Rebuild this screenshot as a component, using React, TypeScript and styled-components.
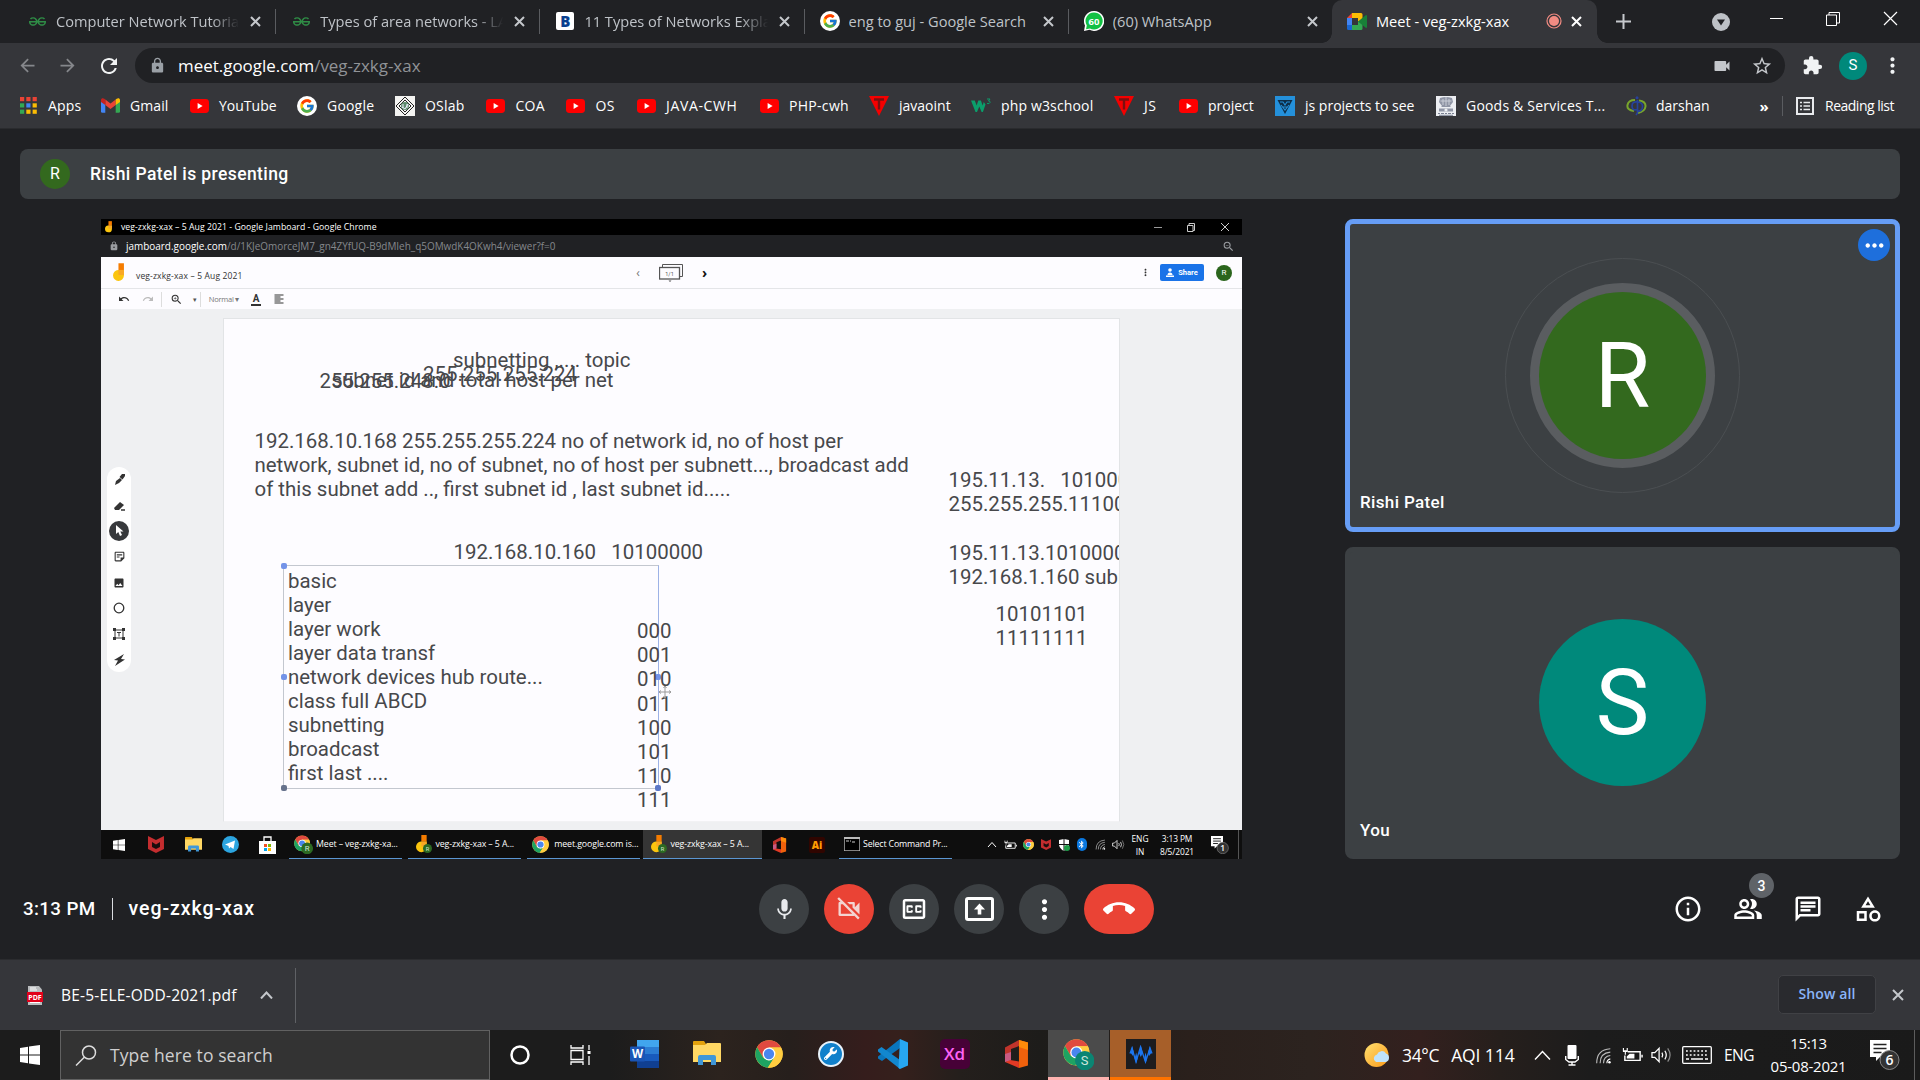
import React from 'react';
import styled, { createGlobalStyle, css } from 'styled-components';
import { FcGoogle } from 'react-icons/fc';
import { FaWrench } from 'react-icons/fa';
import { SiGeeksforgeeks } from 'react-icons/si';
import {
  MdMic, MdOutlineVideocamOff, MdOutlineClosedCaption, MdMoreVert, MdCallEnd, MdInfoOutline,
  MdOutlinePeopleAlt, MdOutlineChat, MdOutlineCategory, MdLock, MdVideocam, MdStarBorder, MdExtension,
  MdZoomOut, MdZoomIn, MdUndo, MdRedo, MdFormatAlignLeft, MdOutlineStickyNote2, MdImage,
  MdArrowBack, MdArrowForward, MdRefresh, MdBluetooth, MdMoreHoriz,
} from 'react-icons/md';

const ui = `"Open Sans", "Noto Sans", sans-serif`;
const product = `Roboto, "Liberation Sans", sans-serif`;

const Global = createGlobalStyle`
  * { box-sizing: border-box; }
  html, body { margin: 0; padding: 0; background: #202124; overflow: hidden; }
  svg { display: block; flex: none; }
`;

const Screen = styled.div`
  width: 1920px;
  height: 1080px;
  display: flex;
  flex-direction: column;
  background: #202124;
  color: #fff;
  font-family: ${ui};
  overflow: hidden;
`;

const Label = styled.span<{ $size?: number; $ls?: number; $color?: string; $weight?: number }>`
  font-size: ${p => p.$size ?? 14}px;
  letter-spacing: ${p => p.$ls ?? 0}px;
  color: ${p => p.$color ?? '#fff'};
  font-weight: ${p => p.$weight ?? 400};
  white-space: pre;
`;

const Cell = styled.div<{ $w: number; $lift?: number }>`
  width: ${p => p.$w}px;
  flex: none;
  display: flex;
  align-items: center;
  justify-content: center;
  padding-bottom: ${p => p.$lift ?? 0}px;
`;

/* ---------- Browser chrome ---------- */

const TabStrip = styled.div`
  height: 43px;
  flex: none;
  display: flex;
  padding-left: 12px;
`;

const Tab = styled.div<{ $active?: boolean; $divider?: boolean }>`
  position: relative;
  width: 264.2px;
  flex: none;
  height: 43px;
  display: flex;
  align-items: center;
  padding: 0 11px 1px 15px;
  background: ${p => (p.$active ? '#35363a' : 'transparent')};
  border-radius: 10px 10px 0 0;
  ${p => p.$divider && css`
    &::after {
      content: '';
      position: absolute;
      right: 0;
      top: 9px;
      width: 1px;
      height: 25px;
      background: #5a5c60;
    }
  `}
  ${p => p.$active && css`
    margin-left: -1px;
    width: 265px;
    &::before, &::after {
      content: '';
      position: absolute;
      bottom: 0;
      width: 10px;
      height: 10px;
    }
    &::before { left: -10px; background: radial-gradient(circle at 0 0, transparent 9.5px, #35363a 10px); }
    &::after { right: -10px; background: radial-gradient(circle at 100% 0, transparent 9.5px, #35363a 10px); }
  `}
`;

const TabIcon = styled.div`
  width: 20px;
  display: flex;
  justify-content: center;
  margin-right: 9px;
`;

const TabTitle = styled.div<{ $fade?: boolean; $active?: boolean; $ls?: number }>`
  flex: 1;
  overflow: hidden;
  white-space: nowrap;
  font-size: 14.6px;
  letter-spacing: ${p => p.$ls ?? 0}px;
  color: ${p => (p.$active ? '#fff' : '#bfc3c8')};
  ${p => p.$fade && css`mask-image: linear-gradient(90deg, #000 84%, transparent 99%);`}
`;

const TabClose = styled.div`
  width: 24px;
  display: flex;
  justify-content: flex-end;
  padding-right: 4px;
`;

const WindowButtons = styled.div`
  display: flex;
  flex: 1;
  align-items: center;
`;

const Toolbar = styled.div`
  height: 45px;
  flex: none;
  background: #35363a;
  display: flex;
  align-items: center;
  padding-left: 10px;
`;

const UrlBar = styled.div`
  width: 1650px;
  height: 35px;
  margin-left: 8px;
  border-radius: 18px;
  background: #202124;
  display: flex;
  align-items: center;
  padding: 0 12px 0 14px;
`;

const Url = styled.div`
  flex: 1;
  margin-left: 12px;
  font-size: 16.95px;
  color: #fff;
  span { color: #909397; }
`;

const Bookmarks = styled.div`
  height: 41px;
  flex: none;
  background: #35363a;
  border-bottom: 1px solid #2a2b2e;
  display: flex;
  align-items: center;
  padding: 0 0 5px 18px;
`;

const Bookmark = styled.div<{ $w: number }>`
  width: ${p => p.$w}px;
  flex: none;
  display: flex;
  align-items: center;
`;

const MarkIcon = styled.div`
  width: 20px;
  height: 20px;
  margin-right: 10px;
  display: flex;
  align-items: center;
  justify-content: center;
`;

const Rule = styled.div<{ $h: number; $c: string }>`
  width: 1px;
  height: ${p => p.$h}px;
  background: ${p => p.$c};
`;

const Circle = styled.div<{ $d: number; $bg: string; $fs: number }>`
  width: ${p => p.$d}px;
  height: ${p => p.$d}px;
  flex: none;
  padding-top: ${p => p.$fs / 30}px;
  border-radius: 50%;
  background: ${p => p.$bg};
  color: #fff;
  font-family: ${product};
  font-size: ${p => p.$fs}px;
  line-height: 1;
  display: flex;
  align-items: center;
  justify-content: center;
`;

/* ---------- Meet ---------- */

const Meet = styled.main`
  height: 830px;
  flex: none;
  display: flex;
  flex-direction: column;
  padding: 20px 20px 0;
  font-family: ${product};
`;

const Banner = styled.div`
  height: 50px;
  flex: none;
  border-radius: 8px;
  background: #3c4043;
  display: flex;
  align-items: center;
  gap: 20px;
  padding-left: 20px;
`;

const Stage = styled.div`
  display: flex;
  margin-top: 20px;
  padding-left: 81px;
  height: 640px;
  flex: none;
`;

const Tiles = styled.div`
  width: 555px;
  margin-left: 103px;
  display: flex;
  flex-direction: column;
  gap: 15px;
`;

const Tile = styled.div<{ $speaking?: boolean }>`
  position: relative;
  height: 312.5px;
  border-radius: 8px;
  background: #3c4043;
  border: 5px solid ${p => (p.$speaking ? '#669df6' : '#3c4043')};
  display: flex;
  align-items: center;
  justify-content: center;
`;

const VoiceHalo = styled.div`
  width: 235px;
  height: 235px;
  border: 1px solid #4b4f52;
  border-radius: 50%;
  display: flex;
  align-items: center;
  justify-content: center;
`;

const VoiceRing = styled.div`
  border: 9.5px solid #5a5d60;
  border-radius: 50%;
  background: #5a5d60;
`;

const TileName = styled.div`
  position: absolute;
  left: 10px;
  bottom: 14.5px;
  font-size: 17px;
  letter-spacing: 0.35px;
  line-height: 20px;
  font-weight: 500;
`;

const TileMenu = styled.div`
  position: absolute;
  top: 5px;
  right: 5px;
  width: 32px;
  height: 32px;
  border-radius: 50%;
  background: #1e6fdc;
  display: flex;
  align-items: center;
  justify-content: center;
`;

const Controls = styled.div`
  display: grid;
  grid-template-columns: 1fr auto 1fr;
  align-items: center;
  height: 100px;
  padding: 0 10px 0 3px;
`;

const MeetingInfo = styled.div`
  display: flex;
  align-items: center;
  gap: 16px;
  padding-bottom: 1px;
`;

const ButtonRow = styled.div`
  display: flex;
  gap: 15px;
`;

const RoundButton = styled.button<{ $red?: boolean; $wide?: boolean }>`
  width: ${p => (p.$wide ? 70 : 50)}px;
  height: 50px;
  padding: 0;
  border: 0;
  border-radius: 25px;
  background: ${p => (p.$red ? '#ea4335' : '#3c4043')};
  color: #fff;
  display: flex;
  align-items: center;
  justify-content: center;
`;

const SideIcons = styled.div`
  display: flex;
  justify-content: flex-end;
  padding-right: 7px;
  gap: 30px;
`;

const SideIcon = styled.div`
  position: relative;
`;

const Count = styled.div`
  position: absolute;
  left: 16px;
  top: -21px;
  width: 25px;
  height: 25px;
  border-radius: 50%;
  background: #5f6368;
  font-size: 14px;
  font-weight: 500;
  display: flex;
  align-items: center;
  justify-content: center;
`;

/* ---------- Shared screen ---------- */

const Shared = styled.section`
  width: 1141px;
  height: 640px;
  flex: none;
  display: flex;
  flex-direction: column;
  overflow: hidden;
  font-family: ${ui};
`;

const SharedTitle = styled.div`
  height: 16px;
  flex: none;
  background: #000;
  display: flex;
  align-items: center;
  padding-left: 4px;
`;

const TitleButtons = styled.div`
  flex: 1;
  display: flex;
  align-items: center;
  justify-content: flex-end;
  gap: 25px;
  padding-right: 12px;
`;

const SharedUrl = styled.div`
  height: 22px;
  flex: none;
  background: #202124;
  display: flex;
  align-items: center;
  padding: 0 7px 0 8px;
  color: #9a9da1;
`;

const UrlText = styled.div`
  flex: 1;
  margin-left: 7px;
  font-size: 9.95px;
  color: #85888c;
  b { font-weight: 400; color: #fff; }
`;

const JamHeader = styled.div`
  height: 32px;
  flex: none;
  background: #fdfcff;
  border-bottom: 1px solid #e4e5e8;
  display: flex;
  align-items: center;
  color: #333;
`;

const JamTitle = styled.div`
  width: 488px;
`;

const JamActions = styled.div`
  flex: 1;
  display: flex;
  align-items: center;
  justify-content: flex-end;
  gap: 11px;
  padding-right: 10px;
  svg:first-child { margin-right: -2px; }
`;

const JamTools = styled.div`
  height: 20px;
  flex: none;
  background: #fdfcff;
  display: flex;
  align-items: center;
  color: #333;
  padding-left: 12px;
`;

const FontColor = styled.span`
  font: 700 10px/11px ${product};
  padding: 0 2px;
  border-bottom: 2px solid #333;
`;

const Share = styled.div`
  width: 44px;
  height: 17px;
  margin-right: 1px;
  border-radius: 2px;
  background: #1a73e8;
  color: #fff;
  font: 700 7.5px ${product};
  display: flex;
  align-items: center;
  justify-content: center;
  gap: 4px;
  svg:first-child { margin-right: 0; }
`;

const JamCanvas = styled.div`
  height: 521px;
  flex: none;
  background: #eff0f2;
  display: flex;
  padding: 9px 0 8px 6px;
`;

const ToolPill = styled.div`
  width: 24px;
  height: 205px;
  margin-top: 149px;
  border-radius: 12px;
  background: #fff;
  color: #333;
  display: grid;
  grid-auto-rows: 25.7px;
  place-items: center;
`;

const Board = styled.div`
  position: relative;
  width: 897px;
  height: 504px;
  margin-left: 92px;
  background: #fdfcff;
  border: 1px solid #e2e4e6;
  border-bottom-color: #f2f2f4;
  overflow: hidden;
`;

const Note = styled.div<{ $x: number; $y: number }>`
  position: absolute;
  left: ${p => p.$x - 224}px;
  top: ${p => p.$y - 338}px;
  font-family: ${product};
  font-size: 20.45px;
  line-height: 24.08px;
  color: #47484b;
  white-space: pre;
`;

const Selection = styled.div`
  position: absolute;
  left: 59px;
  top: 246px;
  width: 376px;
  height: 224px;
  border: 1px solid #c3c7cf;
  border-right-color: #9db2e6;
`;

const Handle = styled.i<{ $x: number; $y: number; $c?: string }>`
  position: absolute;
  left: ${p => p.$x}%;
  top: ${p => p.$y}%;
  width: 6px;
  height: 6px;
  margin: -3px 0 0 -3px;
  border-radius: 2px;
  background: ${p => p.$c ?? '#7393e8'};
`;

const MoveCursor = styled.svg`
  position: absolute;
  left: 434px;
  top: 366px;
`;

const SharedTaskbar = styled.div`
  height: 29px;
  flex: none;
  background: #0e0e0e;
  display: flex;
`;

const SharedTask = styled.div<{ $w: number; $active?: boolean; $gap?: number }>`
  width: ${p => p.$w}px;
  flex: none;
  margin-right: ${p => p.$gap ?? 6}px;
  display: flex;
  align-items: center;
  gap: 3px;
  padding-left: ${p => (p.$active ? 8 : 5)}px;
  background: ${p => (p.$active ? '#353535' : 'transparent')};
  border-bottom: 1px solid #5b96d2;
`;

const Stack = styled.div<{ $w: number }>`
  width: ${p => p.$w}px;
  flex: none;
  display: flex;
  flex-direction: column;
  align-items: center;
  justify-content: center;
  line-height: 13px;
`;

const BlueOval = styled.div`
  width: 10px;
  height: 13px;
  border-radius: 5px;
  background: #0a78e0;
  display: flex;
  align-items: center;
`;

/* ---------- Download shelf & Windows taskbar ---------- */

const Shelf = styled.div`
  height: 71px;
  flex: none;
  background: #35363a;
  border-top: 1px solid #2b2c2f;
  display: flex;
  align-items: center;
  padding: 0 14px 0 27px;
`;

const ShelfName = styled.div`
  width: 199px;
  margin-left: 18px;
`;

const ShelfDivider = styled(Rule)`
  margin-left: 22px;
`;

const ShowAll = styled.div`
  width: 98px;
  height: 39px;
  margin-left: auto;
  margin-right: 13px;
  margin-bottom: 2px;
  padding-bottom: 1px;
  border: 1px solid #404145;
  border-radius: 5px;
  background: #292a2e;
  display: flex;
  align-items: center;
  justify-content: center;
`;

const Taskbar = styled.div`
  height: 50px;
  flex: none;
  display: flex;
  background: linear-gradient(90deg, #1c1c1c 0, #1c1c1c 610px, #2c231e 720px, #261f1c 790px, #351d1c 865px, #35201c 900px, #241f1c 960px, #1d1c1a 1040px, #2a201c 1190px, #2c231f 1310px, #33201e 1420px, #261f1c 1500px, #1c1c1c 1590px, #1a1a1a 100%);
`;

const Search = styled.div`
  width: 430px;
  height: 50px;
  flex: none;
  border: 1px solid #616161;
  background: #333;
  display: flex;
  align-items: center;
  gap: 13px;
  padding-left: 14px;
`;

const TaskButton = styled.div<{ $bg?: string; $line?: string }>`
  width: 61px;
  margin-right: 1px;
  flex: none;
  background: ${p => p.$bg ?? 'transparent'};
  border-bottom: 3px solid ${p => p.$line ?? 'transparent'};
  display: flex;
  align-items: center;
  justify-content: center;
`;

const LetterTile = styled.div<{ $bg: string; $c: string; $s: number; $fs: number; $r?: number }>`
  width: ${p => p.$s}px;
  height: ${p => p.$s}px;
  border-radius: ${p => p.$r ?? 0}px;
  background: ${p => p.$bg};
  color: ${p => p.$c};
  font: 600 ${p => p.$fs}px/1 ${ui};
  display: flex;
  align-items: center;
  justify-content: center;
`;

const WrenchDisc = styled.div`
  width: 26px;
  height: 26px;
  border: 2px solid #e8f2fa;
  border-radius: 50%;
  background: #1080cb;
  display: flex;
  align-items: center;
  justify-content: center;
`;

const TraySpace = styled.div`
  width: 184px;
  flex: none;
`;

const Weather = styled.div`
  width: 129px;
  flex: none;
  display: flex;
  align-items: center;
  gap: 12px;
  padding-left: 4px;
`;

const Clock = styled.div`
  width: 95px;
  flex: none;
  display: flex;
  flex-direction: column;
  align-items: center;
  justify-content: center;
  line-height: 23px;
`;

/* ---------- Drawings ---------- */

const X = ({ s = 9, c = '#c4c7cb', w = 2 }) => (
  <svg width={s + 2} height={s + 2} viewBox={`-1 -1 ${s + 2} ${s + 2}`} stroke={c} strokeWidth={w}>
    <path d={`M0 0 L${s} ${s} M${s} 0 L0 ${s}`} />
  </svg>
);

const YouTube = () => (
  <svg width="19" height="14" viewBox="0 0 19 14"><rect width="19" height="14" rx="3.4" fill="#f00" /><path d="M7.6 4v6l5-3z" fill="#fff" /></svg>
);

const GoogleBall = () => (
  <svg width="20" height="20" viewBox="0 0 20 20"><circle cx="10" cy="10" r="10" fill="#fff" /><FcGoogle x="2" y="2" size={16} /></svg>
);

const Gmail = () => (
  <svg width="19" height="15" viewBox="0 0 19 15">
    <path d="M0 3v10.5q0 1.300 1.300 1.300H4.300V6z" fill="#4285f4" />
    <path d="M19 3v10.5q0 1.300-1.300 1.300H14.700V6z" fill="#34a853" />
    <path d="M4.300 1.600V7l5.200 4 5.200-4V1.600l-5.200 4z" fill="#ea4335" />
    <path d="M0 2.200C0 .2 2 -.3 3.300.8l1 .8V7L0 3.900z" fill="#c5221f" />
    <path d="M19 2.200C19 .2 17-.3 15.700.8l-1 .8V7L19 3.900z" fill="#fbbc04" />
  </svg>
);

const AppsGrid = () => {
  const c = ['#ea4335', '#ea4335', '#ea4335', '#34a853', '#4285f4', '#fbbc04', '#34a853', '#fbbc04', '#fbbc04'];
  return (
    <svg width="17" height="17" viewBox="0 0 17 17">
      {c.map((f, i) => <rect key={i} x={(i % 3) * 6.3} y={Math.floor(i / 3) * 6.3} width="4.2" height="4.2" fill={f} />)}
    </svg>
  );
};

const Triangle = () => (
  <svg width="20" height="20" viewBox="0 0 20 20"><path d="M0 0h20L10 20z" fill="#f40000" /><path d="M5 3.500h10M10 3.500v10" stroke="#7a1010" strokeWidth="2.4" /></svg>
);

const W3 = () => (
  <svg width="20" height="15" viewBox="0 0 20 15">
    <path d="M0 2.500h3.800l1.800 5 1.700-5h2.600l1.700 5 1.200-3.500 1.700 2.500-2.600 7.500h-1.300l-2.300-5.500-2.300 5.500H4.500z" fill="#0b9e6b" />
    <path d="M16 1h3l-1.500 2q2 0 1.500 1.600t-3 .8" stroke="#0b9e6b" fill="none" />
  </svg>
);

const BlueMark = () => (
  <svg width="20" height="20" viewBox="0 0 20 20">
    <rect width="20" height="20" fill="#2490da" />
    <path d="M2.500 4h15L10 18z" fill="#0d2e49" /><path d="M5 6h3l2 3 2-3h3M6 9l4 5 4-5M8 11h4" stroke="#2490da" fill="none" strokeWidth="1.1" />
  </svg>
);

const Diamond = () => (
  <svg width="20" height="20" viewBox="0 0 20 20">
    <rect width="20" height="20" fill="#f4f4f2" />
    <path d="M10 1l9 9-9 9-9-9zM10 4l6 6-6 6-6-6z" fill="none" stroke="#222" />
    <circle cx="10" cy="10" r="4" fill="#5f8d6d" /><path d="M7 11l3 2 3-5M8 8v4M12 8v4" stroke="#eef" fill="none" />
  </svg>
);

const Emblem = () => (
  <svg width="20" height="20" viewBox="0 0 20 20">
    <rect width="20" height="20" fill="#eceef2" />
    <path d="M4 2q6-2 12 0l1 4-3 4 1 1H5l1-1-3-4zM3 12.500h14v3H3z" fill="#8f95a5" />
    <path d="M7 3v6M10 1v9M13 3v6M4.500 5h11" stroke="#c9cdd6" /><circle cx="10" cy="14" r="1.6" fill="#eceef2" />
    <path d="M2 17.500h2M5 17.500h3M9 17.500h2M12 17.500h3M16 17.500h2M3 19.300h14" stroke="#7b8193" />
  </svg>
);

const Darshan = () => (
  <svg width="21" height="20" viewBox="0 0 21 20" fill="none">
    <path d="M9 4Q2.500 4 1.500 9T8 15" stroke="#78a52c" strokeWidth="2" />
    <path d="M13 4.500q7 1 6.500 6T12 17" stroke="#78a52c" strokeWidth="2" />
    <path d="M11.500 4v13l-1.500 2M12 6q-6-1-6 4t5 3.500M12 6q5 .5 4.500 5t-4.500 4" stroke="#26429b" strokeWidth="1.7" /><circle cx="11" cy="1.700" r="1.500" fill="#26429b" />
  </svg>
);

const ReadingList = () => (
  <svg width="18" height="18" viewBox="0 0 18 18" stroke="#e8eaed" fill="none" strokeWidth="2">
    <rect x="1" y="1" width="16" height="16" /><path d="M4 5.500h2M7.500 5.500H14M4 9h2M7.500 9H14M4 12.500h2M7.500 12.500H14" strokeWidth="1.5" />
  </svg>
);

const WhatsApp = () => (
  <svg width="20" height="20" viewBox="0 0 20 20">
    <path d="M10 0a10 10 0 1 1-4.500 18.800L0 20l1-5.500A10 10 0 0 1 10 0z" fill="#fff" />
    <path d="M10 1.500a8.500 8.500 0 1 1-4 15.900L2 18.300l.8-3.900A8.500 8.500 0 0 1 10 1.500z" fill="#12c143" />
    <text x="10" y="13.5" textAnchor="middle" fontSize="9.5" fontWeight="700" fill="#fff" fontFamily="Open Sans">60</text>
  </svg>
);

const MeetLogo = () => (
  <svg width="20" height="17" viewBox="0 0 20 17">
    <path d="M0 5l5-5v5z" fill="#ea4335" /><path d="M0 5h5v7H0z" fill="#4285f4" /><path d="M0 12h5v5H1.500Q0 17 0 15.500z" fill="#1967d2" />
    <path d="M5 0h9q1.500 0 1.500 1.500V6L11 9V5H5z" fill="#fbbc04" /><path d="M5 12h6V8l4.500 3v4.500Q15.500 17 14 17H5z" fill="#34a853" />
    <path d="M11 8.500l8-6.500q1 0 1 1v11q0 1-1 1z" fill="#188038" />
  </svg>
);

const Chrome = ({ s = 28 }) => (
  <svg width={s} height={s} viewBox="0 0 48 48">
    <circle cx="24" cy="24" r="23.5" fill="#ffcd40" />
    <path d="M24 .5A23.500 23.500 0 0 0 3.600 12.300L13.800 30 24 13h20.700A23.500 23.500 0 0 0 24 .5z" fill="#e04a3f" />
    <path d="M3.600 12.300A23.500 23.500 0 0 0 22 47.400L33.500 29.500 24 35l-10.200-5z" fill="#1ea362" />
    <path d="M24 13h20.700A23.500 23.500 0 0 1 22 47.400l11.500-18z" fill="#ffcd40" />
    <circle cx="24" cy="24" r="11" fill="#fff" /><circle cx="24" cy="24" r="8.8" fill="#4a86ee" />
  </svg>
);

const ChromeBadge = ({ s = 28, letter = 'S', c = '#0b8573' }) => (
  <svg width={s * 1.12} height={s * 1.2} viewBox="0 0 34 36">
    <g transform="translate(0 2)"><Chrome s={29} /></g>
    <circle cx="23.500" cy="25.500" r="10.500" fill={c} />
    <text x="23.500" y="30.500" textAnchor="middle" fontSize="14" fill="#cfe7dd" fontFamily="Roboto">{letter}</text>
  </svg>
);

const JamLogo = ({ s = 22, badge = false }) => (
  <svg width={s * 0.62 + (badge ? 4 : 0)} height={s} viewBox={badge ? '0 0 20 22' : '0 0 14 22'}>
    <path d="M6 8h7v7a6.500 6.500 0 1 1-7-7z" fill="#fbc50e" />
    <rect x="6.500" y="0" width="6.500" height="8" fill="#f57c00" /><path d="M6.500 8H13v6H6.500z" fill="#f9a825" />
    {badge && <><circle cx="14" cy="16.500" r="5.500" fill="#2c6a23" /><text x="14" y="19" textAnchor="middle" fontSize="7" fill="#d5e5d0" fontFamily="Roboto">R</text></>}
  </svg>
);

const WinLogo = ({ s = 20 }) => (
  <svg width={s} height={s} viewBox="0 0 20 20" fill="#fff">
    <path d="M0 3l8-1.200v7.700H0zM9 1.600 20 0v9.500H9zM0 10.500h8v7.700L0 17zM9 10.500h11V20L9 18.400z" />
  </svg>
);

const Folder = ({ s = 28 }) => (
  <svg width={s} height={s * 0.86} viewBox="0 0 28 24">
    <path d="M0 1q0-1 1-1h10l2 3v4H0z" fill="#e3a20c" /><path d="M0 4h12l2-2h13q1 0 1 1v18H0z" fill="#ffd864" />
    <path d="M5 24v-8q0-2 2-2h14q2 0 2 2v8h-5v-5h-8v5z" fill="#3f97d8" />
  </svg>
);

const Word = () => (
  <svg width="29" height="28" viewBox="0 0 29 28">
    <path d="M7 0h22v7H7z" fill="#41a5ee" /><path d="M7 7h22v7H7z" fill="#2b7cd3" /><path d="M7 14h22v7H7z" fill="#185abd" /><path d="M7 21h22v7H7z" fill="#103f91" />
    <rect y="6.500" width="15" height="15" rx="1" fill="#1a55b5" />
    <text x="7.500" y="18" textAnchor="middle" fontSize="11.5" fontWeight="700" fill="#fff" fontFamily="Open Sans">W</text>
  </svg>
);

const VSCode = () => (
  <svg width="30" height="30" viewBox="0 0 30 30">
    <path d="M22 0v9L4 22 0 19.500v-2z" fill="#0a76bd" /><path d="M0 12.500v-2L3.500 8 22 21v9z" fill="#1287cf" /><path d="M22 0l8 3.500v23L22 30l-1.500-1z" fill="#27a7f2" />
  </svg>
);

const Office = ({ s = 28 }) => (
  <svg width={s * 0.82} height={s} viewBox="0 0 23 28">
    <path d="M0 7.500 14 0v6L6 9v11l-6 2z" fill="#c0342b" /><path d="M14 0l9 2.500v23L14 28z" fill="#f0610c" /><path d="M0 22l5-2 9 1.500V28z" fill="#e23a25" /><path d="M14 0l9 2.500V10l-9-3z" fill="#fd8b0a" />
    <path d="M0 14v8l6-2v-8z" fill="#c95a82" />
  </svg>
);

const Waveform = () => (
  <svg width="30" height="30" viewBox="0 0 30 30">
    <rect width="30" height="30" fill="#1d1c1e" />
    <path d="M4 14.500L6 9l4 14 4.500-15L19.500 23 24 9l2 5.500" stroke="#1c76f0" strokeWidth="1.3" fill="none" />
    <path d="M6.200 7l1.800 7-1 3-2.300-3zM14.800 6l1.900 8-1.900 4-1.900-4zM23.800 7l1.500 7-2.300 3-1-3zM10.200 13.500l1.400 6-1.400 5-1.600-5zM19.500 13.500l1.600 6-1.600 5-1.400-5z" fill="#1c76f0" />
  </svg>
);

const Wifi = ({ s = 20, c = '#bbb' }) => (
  <svg width={s} height={s} viewBox="0 0 20 20" fill="none" stroke={c} strokeWidth="1.3">
    <path d="M2 19Q2 3 18 2M6 19Q6 7 18 6M10 19q0-8 8-9" /><path d="M14 19q0-4 4-5" stroke="#fff" /><circle cx="17" cy="18" r="1.500" fill="#fff" stroke="none" />
  </svg>
);

const Battery = ({ s = 22 }) => (
  <svg width={s} height={s * 0.73} viewBox="0 0 22 16" fill="none" stroke="#fff" strokeWidth="1.5">
    <path d="M6 5h13v9H3V9M21 8v3" /><path d="M8 7h5v5H5V10z" fill="#fff" stroke="none" /><path d="M1.500 1v3h4V1M3.500 4v4M1 4.500h5" strokeWidth="1.2" />
  </svg>
);

const Speaker = ({ s = 21 }) => (
  <svg width={s} height={s * 0.86} viewBox="0 0 22 18" fill="none" stroke="#fff" strokeWidth="1.3">
    <path d="M1 6.500h3L8.500 2v14L4 11.500H1z" /><path d="M11.500 6.500q1.500 2.500 0 5M14.500 4.500q3 4.500 0 9" /><path d="M17.500 2q5 7 0 14" stroke="#8a8a8a" />
  </svg>
);

const Caret = ({ w = 16, c = '#fff', t = 1.4 }) => (
  <svg width={w} height={w / 2 + 2} viewBox={`0 0 ${w} ${w / 2 + 2}`} fill="none" stroke={c} strokeWidth={t}>
    <path d={`M1 ${w / 2 + 1} L${w / 2} 1.500 L${w - 1} ${w / 2 + 1}`} />
  </svg>
);

const McAfee = ({ s = 17 }) => (
  <svg width={s * 0.94} height={s} viewBox="0 0 16 17"><path d="M0 0l8 4 8-4v13l-8 4-8-4z" fill="#c42d2f" /><path d="M4 6l4 2.500L12 6v5l-4 2-4-2z" fill="#1a0d0d" /></svg>
);

const Notice = ({ n, s = 30 }: { n: string; s?: number }) => (
  <svg width={s} height={s} viewBox="0 0 30 30">
    <path d="M0 0h20v17H10l-4 4v-4H0z" fill="#fff" /><path d="M3.500 4.500h13M3.500 8.500h13M3.500 12.500h8" stroke="#222" strokeWidth="1.6" />
    <circle cx="19.500" cy="20" r="9.5" fill="#333" stroke="#888" />
    <text x="19.500" y="25" textAnchor="middle" fontSize="14" fontWeight="600" fill="#fff" fontFamily="Open Sans">{n}</text>
  </svg>
);

const Present = () => (
  <svg width="29" height="24" viewBox="0 0 29 24" fill="none" stroke="#fff">
    <rect x="1.500" y="1.500" width="26" height="21" rx="1.5" strokeWidth="3" /><path d="M14.500 17.500V10" strokeWidth="3.6" /><path d="M9 12.500l5.500-6 5.500 6z" fill="#fff" stroke="none" />
  </svg>
);

const Pdf = () => (
  <svg width="16" height="19" viewBox="0 0 16 19">
    <path d="M1 0h11l3 3.500V19H1z" fill="#b9bbbd" /><path d="M3 2h6M3 4h7M3 16.500h10" stroke="#fff" strokeWidth="1.2" /><rect y="6" width="16" height="10" fill="#e2001a" />
    <text x="8" y="13.800" textAnchor="middle" fontSize="7" fontWeight="700" fill="#fff" fontFamily="Open Sans">PDF</text>
  </svg>
);

/* ---------- Data ---------- */

const tabs = [
  { icon: <SiGeeksforgeeks color="#2f8d46" size={17} />, title: 'Computer Network Tutorials', fade: true },
  { icon: <SiGeeksforgeeks color="#2f8d46" size={17} />, title: 'Types of area networks - LAN', fade: true },
  { icon: <LetterTile $bg="#fff" $c="#0a3f8f" $s={18} $fs={15} $r={2}><b>B</b></LetterTile>, title: '11 Types of Networks Explained', fade: true },
  { icon: <GoogleBall />, title: 'eng to guj - Google Search' },
  { icon: <WhatsApp />, title: '(60) WhatsApp' },
];

const bookmarks: [number, React.ReactNode, string, number?][] = [
  [82, <AppsGrid />, 'Apps', 0.2],
  [89, <Gmail />, 'Gmail', 0.1],
  [108, <YouTube />, 'YouTube'],
  [98, <GoogleBall />, 'Google', 0.2],
  [90.5, <Diamond />, 'OSlab', 0.2],
  [80, <YouTube />, 'COA', 0.3],
  [70.5, <YouTube />, 'OS', 0.3],
  [123, <YouTube />, 'JAVA-CWH', 0.65],
  [110, <YouTube />, 'PHP-cwh', 0.3],
  [102, <Triangle />, 'javaoint'],
  [143, <W3 />, 'php w3school', 0.15],
  [64, <Triangle />, 'JS', 0.4],
  [97, <YouTube />, 'project'],
  [161, <BlueMark />, 'js projects to see'],
  [190, <Emblem />, 'Goods & Services T...', 0.2],
  [129, <Darshan />, 'darshan'],
];

const notes: [number, number, string][] = [
  [453, 367, 'subnetting ,.... topic'],
  [331.5, 387, 'subnet id and total host per net'],
  [423, 381.5, '255.255.255.224'],
  [319.5, 388.5, '255.255.248.0'],
  [254.5, 448.5, '192.168.10.168 255.255.255.224 no of network id, no of host per\nnetwork, subnet id, no of subnet, no of host per subnett..., broadcast add\nof this subnet add .., first subnet id , last subnet id.....'],
  [453.5, 559, '192.168.10.160   10100000'],
  [948.5, 487.5, '195.11.13.   10100000\n255.255.255.11100000\n\n195.11.13.10100000\n192.168.1.160 subnet'],
  [995.5, 621, '10101101\n11111111'],
  [637, 638.5, '000\n001\n010\n011\n100\n101\n110\n111'],
  [288, 588, 'basic\nlayer\nlayer work\nlayer data transf\nnetwork devices hub route...\nclass full ABCD\nsubnetting\nbroadcast\nfirst last ....'],
];

const SharedScreen = () => (
  <Shared>
    <SharedTitle>
      <JamLogo s={12} />
      <Cell $w={8.5} />
      <Label $size={8.7} $ls={0.04}>veg-zxkg-xax – 5 Aug 2021 - Google Jamboard - Google Chrome</Label>
      <TitleButtons>
        <svg width="8" height="1"><rect width="8" height="1" fill="#999" /></svg>
        <svg width="8" height="9" viewBox="0 0 8 9" fill="none" stroke="#ccc"><path d="M.5 2.500h5.500v6H.5zM2 2.500V.5h5.500v7H6" /></svg>
        <X s={8} c="#ccc" w={1} />
      </TitleButtons>
    </SharedTitle>
    <SharedUrl>
      <MdLock size={10} />
      <UrlText><b>jamboard.google.com</b>/d/1KJeOmorceJM7_gn4ZYfUQ-B9dMIeh_q5OMwdK4OKwh4/viewer?f=0</UrlText>
      <MdZoomOut size={13} />
    </SharedUrl>
    <JamHeader>
      <Cell $w={35}><JamLogo s={19} /></Cell>
      <JamTitle><Label $size={8.5} $ls={0.15} $color="#333">veg-zxkg-xax – 5 Aug 2021</Label></JamTitle>
      <Cell $w={28}><Label $size={12} $color="#777">‹</Label></Cell>
      <Cell $w={38}>
        <svg width="24" height="18" viewBox="0 0 24 18" fill="none" stroke="#555">
          <path d="M3.500 3V.5h20v12H21" /><rect x=".5" y="3.500" width="20" height="11.500" strokeWidth="1.3" />
          <text x="10.500" y="11.500" textAnchor="middle" fontSize="5.5" fill="#555" stroke="none" fontFamily="Roboto">1/1</text>
          <path d="M9.500 16.500h3l-1.500 1.500z" fill="#555" stroke="none" />
        </svg>
      </Cell>
      <Cell $w={29}><Label $size={14} $color="#111" $weight={700}>›</Label></Cell>
      <JamActions>
        <MdMoreVert size={11} />
        <Share>
          <svg width="8" height="9" viewBox="0 0 8 9" fill="#fff"><circle cx="4" cy="2" r="1.800" /><path d="M1.500 7q0-2.500 2.500-2.500T6.500 7zM0 7.600h8V9H0z" /></svg>
          Share
        </Share>
        <Circle $d={16} $bg="#2b651d" $fs={8}>R</Circle>
      </JamActions>
    </JamHeader>
    <JamTools>
      <Cell $w={22}><MdUndo size={12} /></Cell>
      <Cell $w={26}><MdRedo size={12} color="#bbb" /></Cell>
      <Rule $h={15} $c="#ddd" />
      <Cell $w={28}><MdZoomIn size={13} /></Cell>
      <Cell $w={10}><Label $size={7} $color="#555">▾</Label></Cell>
      <Rule $h={15} $c="#ddd" />
      <Cell $w={46}><Label $size={7.5} $ls={-0.2} $color="#777">Normal ▾</Label></Cell>
      <Cell $w={18}><FontColor>A</FontColor></Cell>
      <Cell $w={28}><MdFormatAlignLeft size={12} /></Cell>
    </JamTools>
    <JamCanvas>
      <ToolPill>
        <svg width="11" height="11" viewBox="0 0 11 11"><path d="M1 11l1-4 4-3 2 2-3 3zM5.500 3l2.500-3h3v2L8.500 5.500z" fill="#333" /></svg>
        <svg width="11" height="10" viewBox="0 0 11 10"><path d="M0 7l6-6 4 3-5 5H1z" fill="#333" /><path d="M7 9h4" stroke="#333" strokeWidth="1.5" /></svg>
        <Circle $d={20} $bg="#37393c" $fs={10}>
          <svg width="9" height="12" viewBox="0 0 9 12"><path d="M1 0v9l2.300-2 1.700 4 2-1-1.700-3.600H8.500z" fill="#fff" /></svg>
        </Circle>
        <MdOutlineStickyNote2 size={13} />
        <MdImage size={12} />
        <svg width="12" height="12" viewBox="0 0 12 12"><circle cx="6" cy="6" r="4.800" fill="none" stroke="#333" strokeWidth="1.3" /></svg>
        <svg width="12" height="12" viewBox="0 0 12 12" fill="none" stroke="#333"><path d="M2 2h8v8H2zM4 4.500h4M6 4.500V8.500" /><path d="M0 0h3v3H0zM9 0h3v3H9zM0 9h3v3H0zM9 9h3v3H9z" fill="#333" stroke="none" /></svg>
        <svg width="11" height="12" viewBox="0 0 11 12"><path d="M10 0 0 6l4 .5L1 12l10-6.500L7 5z" fill="#333" /></svg>
      </ToolPill>
      <Board>
        <Selection>
          <Handle $x={0} $y={0} /><Handle $x={0} $y={50} /><Handle $x={100} $y={50} />
          <Handle $x={0} $y={100} $c="#66728c" /><Handle $x={100} $y={100} $c="#5c78c8" />
        </Selection>
        {notes.map(([x, y, t]) => <Note key={t} $x={x} $y={y - 0.2}>{t}</Note>)}
        <MoveCursor width="14" height="14" viewBox="0 0 14 14" fill="none" stroke="#999">
          <path d="M7 1v12M1 7h12M5.500 3L7 1l1.500 2M5.500 11L7 13l1.500-2M3 5.500L1 7l2 1.500M11 5.500L13 7l-2 1.500" />
        </MoveCursor>
      </Board>
    </JamCanvas>
    <SharedTaskbar>
      <Cell $w={36}><WinLogo s={12} /></Cell>
      <Cell $w={38}><McAfee s={17} /></Cell>
      <Cell $w={37}><Folder s={17} /></Cell>
      <Cell $w={37}><svg width="17" height="17" viewBox="0 0 17 17"><circle cx="8.500" cy="8.500" r="8.500" fill="#2ca5e0" /><path d="M3 8.500l10-4-1.500 8.500-3-2-1.500 1.500-.5-2.500z" fill="#fff" /></svg></Cell>
      <Cell $w={36}><svg width="17" height="18" viewBox="0 0 17 18"><path d="M0 5h17v13H0z" fill="#fff" /><path d="M5 5V1h7v4" stroke="#fff" fill="none" strokeWidth="1.3" /><path d="M5 8h3v3H5z" fill="#f25022" /><path d="M9 8h3v3H9z" fill="#7fba00" /><path d="M5 12h3v3H5z" fill="#00a4ef" /><path d="M9 12h3v3H9z" fill="#ffb900" /></svg></Cell>
      <Cell $w={4} />
      <SharedTask $w={113}><ChromeBadge s={17} letter="R" c="#2c6a23" /><Label $size={8.8} $ls={-0.12}>Meet – veg-zxkg-xa...</Label></SharedTask>
      <SharedTask $w={113}><Cell $w={0} /><JamLogo s={20} badge /><Label $size={8.8} $ls={-0.1}>veg-zxkg-xax – 5 A...</Label></SharedTask>
      <SharedTask $w={113} $gap={3}><Chrome s={17} /><Label $size={8.8} $ls={-0.1}> meet.google.com is...</Label></SharedTask>
      <SharedTask $w={119} $active $gap={0}><JamLogo s={20} badge /><Label $size={8.8} $ls={-0.1}>veg-zxkg-xax – 5 A...</Label></SharedTask>
      <Cell $w={36}><Office s={16} /></Cell>
      <Cell $w={38}><LetterTile $bg="#300500" $c="#ff9a00" $s={16} $fs={10} $r={2}><b>Ai</b></LetterTile></Cell>
      <Cell $w={3} />
      <SharedTask $w={113} $gap={31}>
        <svg width="16" height="14" viewBox="0 0 16 14"><rect width="16" height="14" fill="#bbb" /><rect x=".7" y="2" width="14.600" height="11.300" fill="#000" /><path d="M2 4h3M6 4h1M8 5h3" stroke="#ccc" /></svg>
        <Label $size={8.8} $ls={-0.15}>Select Command Pr...</Label>
      </SharedTask>
      <Cell $w={18}><Caret w={10} t={1} /></Cell>
      <Cell $w={18}><Battery s={13} /></Cell>
      <Cell $w={18}><Chrome s={11} /></Cell>
      <Cell $w={18}><McAfee s={11} /></Cell>
      <Cell $w={18}><svg width="11" height="12" viewBox="0 0 11 12"><path d="M0 1l5-1 5 1v5q-1 4-5 6-4-2-5-6z" fill="#fff" /><path d="M5 0v12M0 5.500h10" stroke="#111" /><circle cx="8" cy="9" r="3" fill="#1f9d48" /></svg></Cell>
      <Cell $w={18}><BlueOval><MdBluetooth size={9} color="#fff" /></BlueOval></Cell>
      <Cell $w={18}><Wifi s={11} /></Cell>
      <Cell $w={18}><Speaker s={13} /></Cell>
      <Stack $w={26}><Label $size={8.4}>ENG</Label><Label $size={8.4}>IN</Label></Stack>
      <Stack $w={48}><Label $size={8.4} $ls={-0.1}>3:13 PM</Label><Label $size={8.4} $ls={-0.1}>8/5/2021</Label></Stack>
      <Cell $w={37}><Notice n="1" s={18} /></Cell>
      <Rule $h={29} $c="#555" />
    </SharedTaskbar>
  </Shared>
);

export default function App() {
  return (
    <Screen>
      <Global />
      <TabStrip>
        {tabs.map((t, i) => (
          <Tab key={t.title} $divider={i < 4}>
            <TabIcon>{t.icon}</TabIcon>
            <TabTitle $fade={t.fade}>{t.title}</TabTitle>
            <TabClose><X /></TabClose>
          </Tab>
        ))}
        <Tab $active>
          <TabIcon><MeetLogo /></TabIcon>
          <TabTitle $active>Meet - veg-zxkg-xax</TabTitle>
          <svg width="16" height="16" viewBox="0 0 16 16"><circle cx="8" cy="8" r="7" fill="none" stroke="#f28b82" strokeWidth="1.2" /><circle cx="8" cy="8" r="5" fill="#f28b82" /></svg>
          <TabClose><X c="#fff" /></TabClose>
        </Tab>
        <WindowButtons>
          <Cell $w={54}><svg width="15" height="15" viewBox="0 0 15 15" stroke="#c6c9cd" strokeWidth="2"><path d="M0 7.500h15M7.500 0v15" /></svg></Cell>
          <Cell $w={50} />
          <Cell $w={41}><svg width="18" height="18" viewBox="0 0 18 18"><circle cx="9" cy="9" r="9" fill="#bdc1c6" /><path d="M5 6.500h8l-4 6z" fill="#202124" /></svg></Cell>
          <Cell $w={70} $lift={6}><svg width="13" height="1"><rect width="13" height="1" fill="#fff" /></svg></Cell>
          <Cell $w={42} $lift={6}><svg width="14" height="14" viewBox="0 0 14 14" fill="none" stroke="#fff"><path d="M.5 3h10v10.500H.5zM3 3V.5h10.500V11h-3" /></svg></Cell>
          <Cell $w={8} />
          <Cell $w={58} $lift={6}><X s={13} c="#fff" w={1.2} /></Cell>
        </WindowButtons>
      </TabStrip>
      <Toolbar>
        <Cell $w={35}><MdArrowBack size={21} color="#85878b" /></Cell>
        <Cell $w={45}><MdArrowForward size={21} color="#85878b" /></Cell>
        <Cell $w={37}><MdRefresh size={24} color="#f1f3f4" /></Cell>
        <UrlBar>
          <MdLock size={17} color="#9aa0a6" />
          <Url>meet.google.com<span>/veg-zxkg-xax</span></Url>
          <Cell $w={58}><MdVideocam size={20} color="#c4c7cb" /></Cell>
          <Cell $w={22}><MdStarBorder size={22} color="#c4c7cb" /></Cell>
        </UrlBar>
        <Cell $w={54}><MdExtension size={21} color="#f1f3f4" /></Cell>
        <Cell $w={28}><Circle $d={28} $bg="#00897b" $fs={15}>S</Circle></Cell>
        <Cell $w={50}><MdMoreVert size={25} color="#f1f3f4" /></Cell>
      </Toolbar>
      <Bookmarks>
        {bookmarks.map(([w, icon, name, ls]) => (
          <Bookmark key={name} $w={w}><MarkIcon>{icon}</MarkIcon><Label $ls={ls}>{name}</Label></Bookmark>
        ))}
        <Cell $w={18}><Label $size={15} $weight={700}>»</Label></Cell>
        <Cell $w={18}><Rule $h={20} $c="#5a5c60" /></Cell>
        <Cell $w={28}><ReadingList /></Cell>
        <Cell $w={6} />
        <Label $ls={-0.5}>Reading list</Label>
      </Bookmarks>

      <Meet>
        <Banner>
          <Circle $d={30} $bg="#33691e" $fs={16}>R</Circle>
          <Label $size={17.5} $ls={0.4} $weight={500}>Rishi Patel is presenting</Label>
        </Banner>
        <Stage>
          <SharedScreen />
          <Tiles>
            <Tile $speaking>
              <VoiceHalo><VoiceRing><Circle $d={167} $bg="#33691e" $fs={90}>R</Circle></VoiceRing></VoiceHalo>
              <TileMenu><MdMoreHoriz size={27} color="#fff" /></TileMenu>
              <TileName>Rishi Patel</TileName>
            </Tile>
            <Tile>
              <Circle $d={167} $bg="#00897b" $fs={90}>S</Circle>
              <TileName>You</TileName>
            </Tile>
          </Tiles>
        </Stage>
        <Controls>
          <MeetingInfo>
            <Label $size={18.8} $ls={0.35} $weight={500}>3:13 PM</Label>
            <Rule $h={22} $c="#dadce0" />
            <Label $size={19.5} $ls={0.95} $weight={500}>veg-zxkg-xax</Label>
          </MeetingInfo>
          <ButtonRow>
            <RoundButton><MdMic size={25} color="#e8eaed" /></RoundButton>
            <RoundButton $red><MdOutlineVideocamOff size={28} color="#f3d4d1" /></RoundButton>
            <RoundButton><MdOutlineClosedCaption size={30} /></RoundButton>
            <RoundButton><Present /></RoundButton>
            <RoundButton><MdMoreVert size={31} /></RoundButton>
            <RoundButton $red $wide><MdCallEnd size={32} /></RoundButton>
          </ButtonRow>
          <SideIcons>
            <SideIcon><MdInfoOutline size={30} /></SideIcon>
            <SideIcon><MdOutlinePeopleAlt size={30} /><Count>3</Count></SideIcon>
            <SideIcon><MdOutlineChat size={30} /></SideIcon>
            <SideIcon><MdOutlineCategory size={30} /></SideIcon>
          </SideIcons>
        </Controls>
      </Meet>

      <Shelf>
        <Pdf />
        <ShelfName><Label $size={15.5} $ls={0.22}>BE-5-ELE-ODD-2021.pdf</Label></ShelfName>
        <Caret w={13} c="#c4c7cb" t={2} />
        <ShelfDivider $h={55} $c="#5f6165" />
        <ShowAll><Label $weight={600} $ls={0.1} $color="#8ab4f8">Show all</Label></ShowAll>
        <Cell $w={17} $lift={1}><X s={10} /></Cell>
      </Shelf>

      <Taskbar>
        <Cell $w={60}><WinLogo s={20} /></Cell>
        <Search>
          <svg width="22" height="21" viewBox="0 0 22 21" fill="none" stroke="#ddd" strokeWidth="1.5"><circle cx="14" cy="7.500" r="6.500" /><path d="M9.300 12.300 1 20.500" /></svg>
          <Label $size={17.5} $ls={0.1} $color="#cfcfcf">Type here to search</Label>
        </Search>
        <Cell $w={60}><svg width="20" height="20" viewBox="0 0 20 20"><circle cx="10" cy="10" r="8.500" fill="none" stroke="#fff" strokeWidth="2.5" /></svg></Cell>
        <Cell $w={61}>
          <svg width="21" height="20" viewBox="0 0 21 20" fill="none" stroke="#fff" strokeWidth="1.3"><path d="M1 0v3h12V0M1 5.500h12v9H1zM1 20v-3h12v3M19 0v5M19 11v9" /><rect x="17.500" y="6" width="3" height="3" fill="#fff" stroke="none" /></svg>
        </Cell>
        <Cell $w={3} />
        <TaskButton><Word /></TaskButton>
        <TaskButton><Folder s={28} /></TaskButton>
        <TaskButton><Chrome s={28} /></TaskButton>
        <TaskButton><WrenchDisc><FaWrench size={13} color="#fff" /></WrenchDisc></TaskButton>
        <TaskButton><VSCode /></TaskButton>
        <TaskButton><LetterTile $bg="#470137" $c="#ff61f6" $s={30} $fs={17} $r={5}>Xd</LetterTile></TaskButton>
        <TaskButton><Office s={28} /></TaskButton>
        <TaskButton $bg="#4b4b4b" $line="#ffb3b0"><ChromeBadge s={28} /></TaskButton>
        <TaskButton $bg="#a75f29" $line="#ff7300"><Waveform /></TaskButton>
        <TraySpace />
        <Cell $w={42}>
          <svg width="26" height="28" viewBox="0 0 26 28">
            <defs><linearGradient id="sun" x1="0" y1="0" x2="1" y2="1"><stop offset="0" stopColor="#ffe070" /><stop offset="1" stopColor="#fb9a1a" /></linearGradient></defs>
            <circle cx="12.500" cy="14" r="12" fill="url(#sun)" /><path d="M12 21a4 4 0 0 1 1-7.500 5 5 0 0 1 9-1 4.500 4.500 0 0 1 0 8.500z" fill="#bfe3fb" />
          </svg>
        </Cell>
        <Weather><Label $size={17.5} $ls={-0.35}>34°C</Label><Label $size={17.5} $ls={-0.1}>AQI 114</Label></Weather>
        <Cell $w={30}><Caret w={17} /></Cell>
        <Cell $w={30}><svg width="14" height="21" viewBox="0 0 14 21"><rect x="2.500" width="9" height="14" rx="1" fill="#fff" /><path d="M.7 11v3.500L4 17h6l3.300-2.500V11M7 17v3M3.500 20h7" stroke="#fff" fill="none" strokeWidth="1.4" /></svg></Cell>
        <Cell $w={32}><Wifi s={17} /></Cell>
        <Cell $w={26}><Battery s={21} /></Cell>
        <Cell $w={32}><Speaker s={21} /></Cell>
        <Cell $w={40}><svg width="30" height="18" viewBox="0 0 30 18" fill="none" stroke="#fff" strokeWidth="1.3"><rect x=".7" y=".7" width="28.600" height="16.600" rx="1" /><path d="M4 5h22M4 9h22" strokeDasharray="1.800 2" /><path d="M4 13h3M9 13h12M23 13h3" /></svg></Cell>
        <Cell $w={44}><Label $size={15.5} $ls={-0.5}>ENG</Label></Cell>
        <Clock><Label $size={15} $ls={-0.3}>15:13</Label><Label $size={15} $ls={-0.25}>05-08-2021</Label></Clock>
        <Cell $w={58}><Notice n="6" /></Cell>
        <Rule $h={50} $c="#5c5c5c" />
      </Taskbar>
    </Screen>
  );
}
